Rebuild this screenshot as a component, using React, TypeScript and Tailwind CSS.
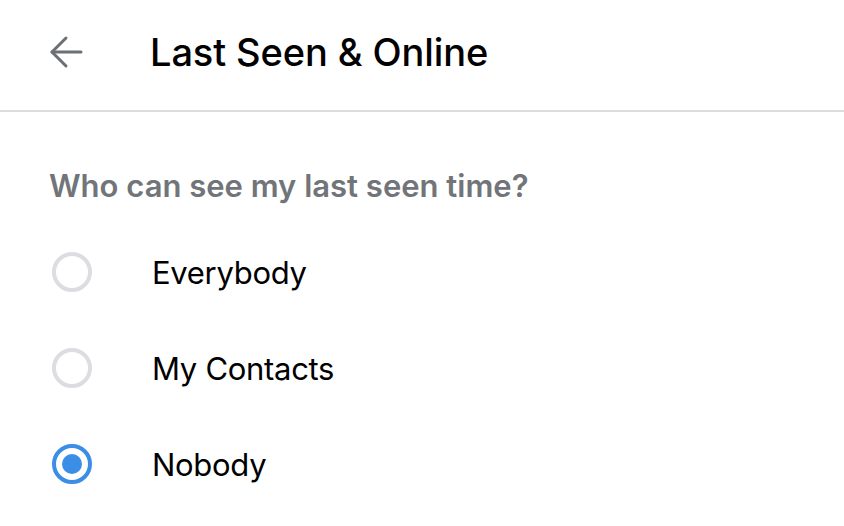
import React, { useState } from 'react';

const options = ['Everybody', 'My Contacts', 'Nobody'];

const Radio: React.FC<{ checked: boolean }> = ({ checked }) => (
    <div
        className={`w-10 h-10 rounded-full border-4 flex items-center justify-center ${
            checked ? 'border-[#3a8ee6]' : 'border-[#dcdde0]'
        }`}
    >
        {checked && <div className="w-5 h-5 rounded-full bg-[#3a8ee6]" />}
    </div>
);

const App: React.FC = () => {
    const [selected, setSelected] = useState('Nobody');

    return (
        <div className="w-[844px] h-[526px] bg-white overflow-hidden font-['Inter',sans-serif]">
            <header className="h-[112px] flex items-center border-b-2 border-[#dcdce0]">
                <button className="ml-[48px] w-9 h-9 flex items-center justify-center text-[#6b7075] -mt-[6px]">
                    <svg width="34" height="34" viewBox="0 0 34 34" fill="none" stroke="currentColor" strokeWidth="3" strokeLinecap="round" strokeLinejoin="round">
                        <path d="M32 17H3" />
                        <path d="M17 3L3 17l14 14" />
                    </svg>
                </button>
                <h1 className="ml-[66px] text-[38px] leading-none font-medium text-black -mt-[6px] tracking-[-0.1px]">Last Seen &amp; Online</h1>
            </header>

            <div className="px-[49px] pt-[58px]">
                <h2 className="text-[31px] font-semibold text-[#717579] leading-none">Who can see my last seen time?</h2>
                <div className="mt-[51px] flex flex-col gap-[56px]">
                    {options.map(opt => (
                        <label
                            key={opt}
                            className="flex items-center cursor-pointer h-10"
                            onClick={() => setSelected(opt)}
                        >
                            <div className="ml-[3px]">
                                <Radio checked={selected === opt} />
                            </div>
                            <span className="ml-[60px] text-[31px] leading-none text-black tracking-[-0.3px]">{opt}</span>
                        </label>
                    ))}
                </div>
            </div>
        </div>
    );
};

export default App;
